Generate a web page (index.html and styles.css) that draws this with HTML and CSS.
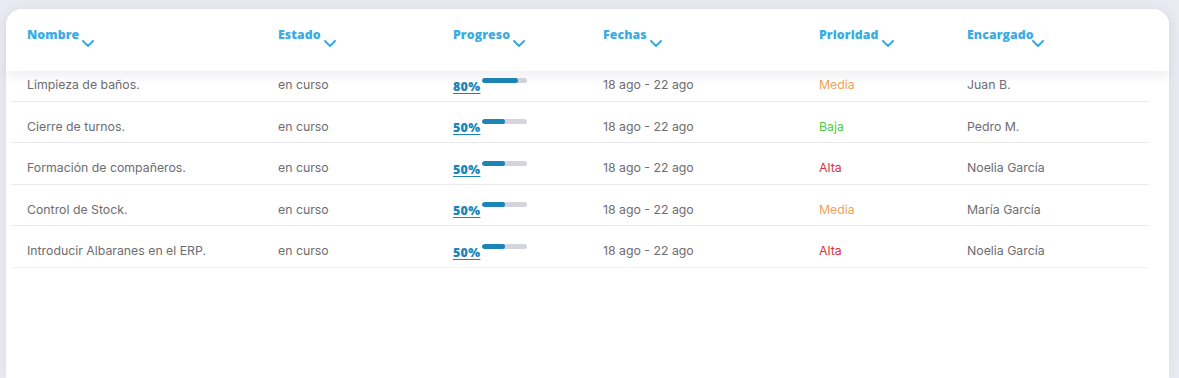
FILE: index.html
```html
<!DOCTYPE html>
<html lang="es">
<head>
<meta charset="utf-8">
<title>Tareas</title>
<link rel="stylesheet" href="styles.css">
</head>
<body>
<div class="card">
  <div class="head">
    <div class="hc c1"><span>Nombre</span><svg class="chev" viewBox="0 0 12 7"><path d="M1 1 L6 6 L11 1"/></svg></div>
    <div class="hc c2"><span>Estado</span><svg class="chev" viewBox="0 0 12 7"><path d="M1 1 L6 6 L11 1"/></svg></div>
    <div class="hc c3"><span>Progreso</span><svg class="chev" viewBox="0 0 12 7"><path d="M1 1 L6 6 L11 1"/></svg></div>
    <div class="hc c4"><span>Fechas</span><svg class="chev" viewBox="0 0 12 7"><path d="M1 1 L6 6 L11 1"/></svg></div>
    <div class="hc c5"><span>Prioridad</span><svg class="chev" viewBox="0 0 12 7"><path d="M1 1 L6 6 L11 1"/></svg></div>
    <div class="hc c6"><span>Encargado</span><svg class="chev tight" viewBox="0 0 12 7"><path d="M1 1 L6 6 L11 1"/></svg></div>
  </div>
  <div class="rows">
    <div class="row">
      <div>Limpieza de baños.</div>
      <div>en curso</div>
      <div class="prog"><a class="pct">80%</a><span class="bar"><span class="fill" style="width:80%"></span></span></div>
      <div>18 ago - 22 ago</div>
      <div class="media">Media</div>
      <div>Juan B.</div>
    </div>
    <div class="row">
      <div>Cierre de turnos.</div>
      <div>en curso</div>
      <div class="prog"><a class="pct">50%</a><span class="bar"><span class="fill" style="width:50%"></span></span></div>
      <div>18 ago - 22 ago</div>
      <div class="baja">Baja</div>
      <div>Pedro M.</div>
    </div>
    <div class="row">
      <div>Formación de compañeros.</div>
      <div>en curso</div>
      <div class="prog"><a class="pct">50%</a><span class="bar"><span class="fill" style="width:50%"></span></span></div>
      <div>18 ago - 22 ago</div>
      <div class="alta">Alta</div>
      <div>Noelia García</div>
    </div>
    <div class="row">
      <div>Control de Stock.</div>
      <div>en curso</div>
      <div class="prog"><a class="pct">50%</a><span class="bar"><span class="fill" style="width:50%"></span></span></div>
      <div>18 ago - 22 ago</div>
      <div class="media">Media</div>
      <div>María García</div>
    </div>
    <div class="row">
      <div>Introducir Albaranes en el ERP.</div>
      <div>en curso</div>
      <div class="prog"><a class="pct">50%</a><span class="bar"><span class="fill" style="width:50%"></span></span></div>
      <div>18 ago - 22 ago</div>
      <div class="alta">Alta</div>
      <div>Noelia García</div>
    </div>
  </div>
</div>
</body>
</html>
```

FILE: styles.css
```css
* { box-sizing: border-box; }
html, body { margin: 0; padding: 0; }
body {
  background: #eaecf3;
  font-family: Inter, "Noto Sans", sans-serif;
  height: 378px;
  overflow: hidden;
  padding: 9px 10px 0 6px;
}
.card {
  background: #fff;
  border-radius: 16px 16px 0 0;
  height: 369px;
  box-shadow: 0 0 14px rgba(170, 176, 200, 0.25);
}
.head {
  position: relative;
  z-index: 1;
  height: 62px;
  background: #fff;
  border-radius: 16px 16px 0 0;
  box-shadow: 0 6px 10px rgba(120, 120, 150, 0.10);
  display: grid;
  grid-template-columns: 251px 175px 150px 216px 148px 1fr;
  padding-left: 21px;
  padding-top: 20px;
}
.hc {
  display: flex;
  align-items: flex-start;
  color: #39ace2;
  font-family: "Open Sans", Inter, sans-serif;
  font-weight: 800;
  font-size: 12.3px;
  letter-spacing: 0.1px;
}
.hc span { line-height: 12px; }
.chev {
  width: 12px;
  height: 7px;
  margin-top: 11px;
  margin-left: 3px;
  fill: none;
  stroke: #39ace2;
  stroke-width: 2;
  stroke-linecap: round;
  stroke-linejoin: round;
}
.chev.tight { margin-left: -2px; }
.rows {
  margin: -11px 20px 0 5px;
}
.row {
  display: grid;
  grid-template-columns: 251px 175px 150px 216px 148px 1fr;
  padding-left: 16px;
  height: 41.5px;
  padding-top: 9px;
  align-items: center;
  border-bottom: 1px solid #e9e9ee;
  font-size: 12.3px;
  color: #6d6d71;
}
.row:last-child { border-bottom-color: #f3f3f6; }
.prog { display: flex; align-items: flex-start; }
.pct {
  color: #1a86b8;
  font-family: "Open Sans", Inter, sans-serif;
  font-weight: 800;
  font-size: 12.5px;
  letter-spacing: 0.3px;
  text-decoration: underline;
  text-underline-offset: 2px;
  padding-top: 4px;
  line-height: 12px;
}
.bar {
  margin-left: 2px;
  margin-top: 1px;
  width: 45px;
  height: 5px;
  border-radius: 3px;
  background: #d4d4dc;
  display: block;
  overflow: hidden;
}
.fill { display: block; height: 100%; background: #1a85b6; border-radius: 3px; }
.media { color: #f3a257; }
.baja { color: #4fcb45; }
.alta { color: #d9323c; }
```
